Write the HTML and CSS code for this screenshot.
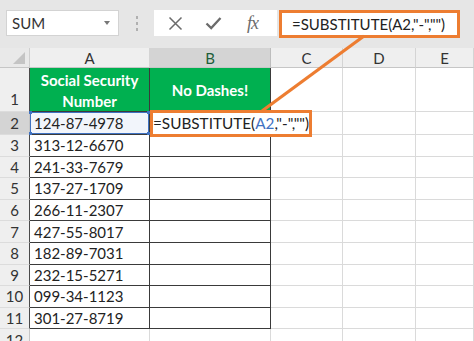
FILE: index.html
```html
<!DOCTYPE html>
<html>
<head>
<meta charset="utf-8">
<link rel="stylesheet" href="styles.css">
</head>
<body>
<div class="page">
  <div class="toolbar">
    <div class="namebox"><span class="name">SUM</span><span class="caret"></span></div>
    <div class="sep"><i></i><i></i><i></i></div>
    <div class="fbtns">
      <svg class="ico x" width="15" height="15" viewBox="0 0 15 15"><path d="M1.5 1.5 L13.5 13.5 M13.5 1.5 L1.5 13.5" stroke="#6b6b6b" stroke-width="1.5" fill="none"/></svg>
      <svg class="ico ok" width="17" height="14" viewBox="0 0 17 14"><path d="M1.5 7.5 L6.2 12 L15.5 2" stroke="#6b6b6b" stroke-width="2.3" fill="none"/></svg>
      <span class="fx">fx</span>
    </div>
    <div class="fbox">=SUBSTITUTE(A2,"-","")</div>
  </div>
  <div class="sheet">
    <div class="corner"><span class="tri"></span></div>
    <div class="ch">A</div>
    <div class="ch sel">B</div>
    <div class="ch">C</div>
    <div class="ch">D</div>
    <div class="ch">E</div>

    <div class="rh bottom edge">1</div>
    <div class="c dk green">Social Security<br>Number</div>
    <div class="c dk green mid">No Dashes!</div>
    <div class="c lt"></div><div class="c lt"></div><div class="c lt"></div>

    <div class="rh sel">2</div>
    <div class="c dk ref">124-87-4978<span class="hd tl"></span><span class="hd tr"></span><span class="hd bl"></span><span class="hd br"></span></div>
    <div class="c dk formula">=SUBSTITUTE(<span class="blue">A2</span>,"-","")</div>
    <div class="c lt"></div><div class="c lt"></div><div class="c lt"></div>

    <div class="rh edge">3</div><div class="c dk">313-12-6670</div><div class="c dk"></div><div class="c lt"></div><div class="c lt"></div><div class="c lt"></div>
    <div class="rh edge">4</div><div class="c dk">241-33-7679</div><div class="c dk"></div><div class="c lt"></div><div class="c lt"></div><div class="c lt"></div>
    <div class="rh edge">5</div><div class="c dk">137-27-1709</div><div class="c dk"></div><div class="c lt"></div><div class="c lt"></div><div class="c lt"></div>
    <div class="rh edge">6</div><div class="c dk">266-11-2307</div><div class="c dk"></div><div class="c lt"></div><div class="c lt"></div><div class="c lt"></div>
    <div class="rh edge">7</div><div class="c dk">427-55-8017</div><div class="c dk"></div><div class="c lt"></div><div class="c lt"></div><div class="c lt"></div>
    <div class="rh edge">8</div><div class="c dk">182-89-7031</div><div class="c dk"></div><div class="c lt"></div><div class="c lt"></div><div class="c lt"></div>
    <div class="rh edge">9</div><div class="c dk">232-15-5271</div><div class="c dk"></div><div class="c lt"></div><div class="c lt"></div><div class="c lt"></div>
    <div class="rh edge">10</div><div class="c dk">099-34-1123</div><div class="c dk"></div><div class="c lt"></div><div class="c lt"></div><div class="c lt"></div>
    <div class="rh edge">11</div><div class="c dk">301-27-8719</div><div class="c dk"></div><div class="c lt"></div><div class="c lt"></div><div class="c lt"></div>
    <div class="rh">12</div><div class="c lt"></div><div class="c lt"></div><div class="c lt"></div><div class="c lt"></div><div class="c lt"></div>
  </div>
  <div class="cellbox"></div>
  <svg class="connector" width="474" height="341" viewBox="0 0 474 341"><line x1="364" y1="36" x2="262" y2="111" stroke="#ed7d31" stroke-width="3.2"/></svg>
</div>
</body>
</html>
```
FILE: styles.css
```css
html, body {
  margin: 0;
  padding: 0;
}
body {
  width: 474px;
  height: 341px;
  overflow: hidden;
  background: #ffffff;
  font-family: Lato, "Open Sans", "Liberation Sans", sans-serif;
}
.page {
  position: relative;
  width: 474px;
  height: 341px;
  overflow: hidden;
}
.toolbar {
  height: 48px;
  background: #e6e6e6;
  display: flex;
  align-items: flex-start;
  padding-top: 10px;
  box-sizing: border-box;
}
.namebox {
  margin-left: 6px;
  width: 113px;
  height: 26px;
  background: #fff;
  border: 1px solid #d3d3d3;
  box-sizing: border-box;
  display: flex;
  align-items: center;
  justify-content: space-between;
  padding: 0 8px 0 5px;
}
.name {
  font-size: 15px;
  color: #333;
}
.caret {
  width: 0;
  height: 0;
  border-left: 3.5px solid transparent;
  border-right: 3.5px solid transparent;
  border-top: 4px solid #777;
}
.sep {
  width: 35px;
  height: 26px;
  display: flex;
  flex-direction: column;
  align-items: center;
  justify-content: center;
  gap: 3px;
}
.sep i {
  display: block;
  width: 2px;
  height: 3px;
  background: #b0b0b0;
}
.fbtns {
  width: 123px;
  height: 26px;
  background: #fff;
  display: flex;
  align-items: center;
  box-sizing: border-box;
  padding-left: 14px;
}
.ico.x { margin-right: 22px; }
.ico.ok { margin-right: 25px; }
.fx {
  font-family: "Liberation Serif", "DejaVu Serif", serif;
  font-style: italic;
  font-size: 18px;
  color: #6b6b6b;
  letter-spacing: -1px;
}
.fbox {
  margin-left: 2px;
  width: 181px;
  height: 28px;
  border: 3px solid #ed7d31;
  background: #fff;
  box-sizing: border-box;
  font-size: 15px;
  color: #222;
  display: flex;
  align-items: center;
  padding-left: 10px;
  white-space: nowrap;
}
.sheet {
  display: grid;
  grid-template-columns: 30px 120px 121px 72px 73px 58px;
  grid-template-rows: 20px 44px 23px repeat(10, 21.6px);
}
.corner {
  background: #e9e9e9;
  border-right: 1px solid #cfcfcf;
  border-bottom: 1px solid #c6c6c6;
  position: relative;
}
.tri {
  position: absolute;
  right: 4px;
  bottom: 3px;
  width: 0;
  height: 0;
  border-left: 12px solid transparent;
  border-bottom: 12px solid #c4c4c4;
}
.ch {
  background: #efefef;
  border-right: 1px solid #d4d4d4;
  border-bottom: 1px solid #c6c6c6;
  font-size: 15px;
  color: #333;
  display: flex;
  align-items: center;
  justify-content: center;
}
.ch.sel {
  background: #d4d4d4;
  color: #1e5e3a;
  border-right-color: #bdbdbd;
}
.rh {
  background: #efefef;
  border-right: 1px solid #c6c6c6;
  border-bottom: 1px solid #dcdcdc;
  font-size: 15px;
  color: #333;
  display: flex;
  align-items: center;
  justify-content: center;
  box-sizing: border-box;
}
.rh.edge {
  border-right: 1px solid #4a4a4a;
}
.rh.bottom {
  align-items: flex-end;
  padding-bottom: 3px;
}
.rh.sel {
  background: #d4d4d4;
}
.c {
  box-sizing: border-box;
  font-size: 15px;
  color: #222;
  display: flex;
  align-items: center;
  padding-left: 4px;
  white-space: nowrap;
  position: relative;
}
.c.lt {
  border-right: 1px solid #dadada;
  border-bottom: 1px solid #dadada;
}
.c.dk {
  border-right: 1.5px solid #3a3a3a;
  border-bottom: 1.5px solid #3a3a3a;
}
.c.green {
  background: #00b050;
  color: #fff;
  font-weight: 700;
  font-size: 15px;
  justify-content: center;
  text-align: center;
  line-height: 21px;
  padding-left: 0;
  padding-top: 2px;
}
.c.ref {
  background: #f2f5fb;
  box-shadow: inset 0 0 0 1px #3f72c2;
}
.hd {
  position: absolute;
  width: 3px;
  height: 3px;
  background: #3f72c2;
}
.hd.tl { left: -1px; top: -1px; }
.hd.tr { right: -1px; top: -1px; }
.hd.bl { left: -1px; bottom: -1px; }
.hd.br { right: -1px; bottom: -1px; }
.c.formula {
  overflow: visible;
  z-index: 2;
  border-right: none;
  font-size: 15.3px;
  padding-left: 3px;
}
.blue {
  color: #3f72c2;
}
.cellbox {
  position: absolute;
  left: 150px;
  top: 110px;
  width: 162px;
  height: 27px;
  border: 3px solid #ed7d31;
  box-sizing: border-box;
  z-index: 3;
  background: transparent;
}
.connector {
  position: absolute;
  left: 0;
  top: 0;
  z-index: 4;
  pointer-events: none;
}
```
